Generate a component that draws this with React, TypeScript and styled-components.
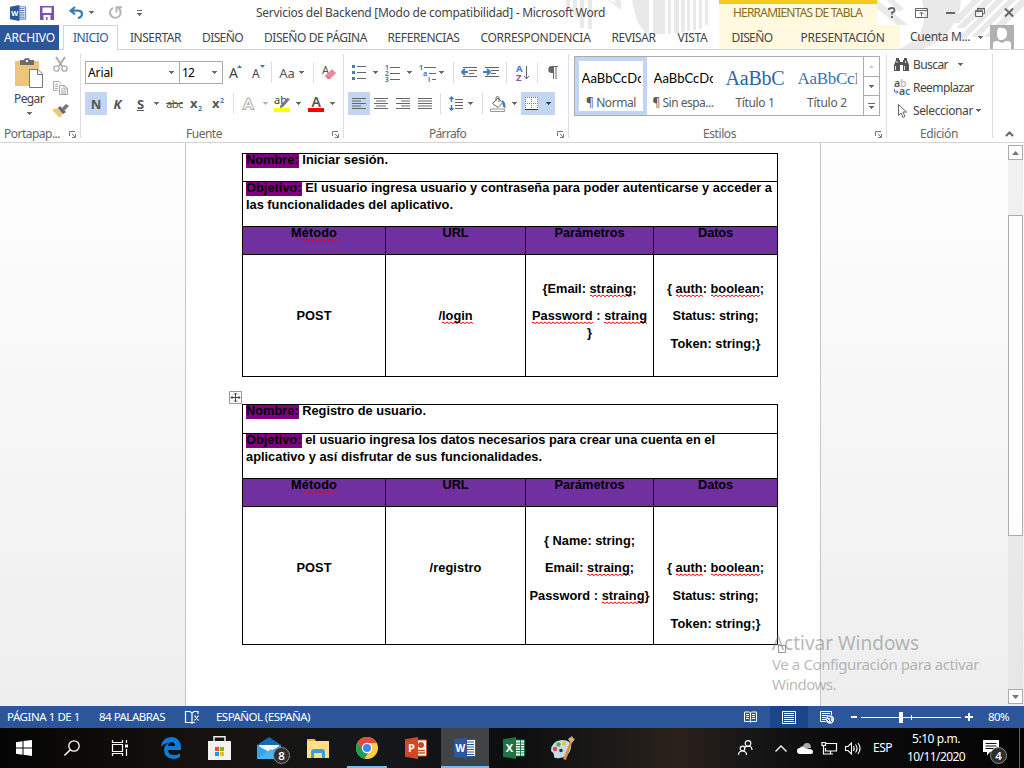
import React, { useLayoutEffect, useRef, useState } from 'react';
import styled, { createGlobalStyle, css } from 'styled-components';

const UI = '"Noto Sans", "Open Sans", sans-serif';

const GlobalStyle = createGlobalStyle`
  * { box-sizing: border-box; }
  body { margin: 0; width: 1024px; height: 768px; overflow: hidden; font: 12px/16px ${UI}; color: #444; }
  svg { display: block; flex: none; overflow: visible; }
`;

/* ---------- text tracked to a given measure ---------- */

const Tracked = styled.span<{ $w: number }>`
  display: inline-block;
  flex: none;
  width: ${p => p.$w}px;
  white-space: nowrap;
`;

function Fit({ w, children, className }: { w: number; children: React.ReactNode; className?: string }) {
  const inner = useRef<HTMLSpanElement>(null);
  const [spacing, setSpacing] = useState(0);
  useLayoutEffect(() => {
    const el = inner.current!;
    const count = (el.textContent || '').length;
    setSpacing((w - el.getBoundingClientRect().width) / count);
  }, [w]);
  return (
    <Tracked $w={w} className={className}>
      <span ref={inner} style={{ letterSpacing: `${spacing}px` }}>{children}</span>
    </Tracked>
  );
}

/* ---------- shared bits ---------- */

const Item = styled.div<{ $ml?: number; $w: number; $on?: boolean }>`
  display: flex;
  align-items: center;
  justify-content: center;
  flex: none;
  margin-left: ${p => p.$ml || 0}px;
  width: ${p => p.$w}px;
  height: ${p => (p.$on ? '23px' : '100%')};
  background: ${p => (p.$on ? '#c2d5f2' : 'transparent')};
  white-space: nowrap;
`;

const Caret = ({ color = '#6a6a6a' }: { color?: string }) => (
  <svg width="5" height="3" viewBox="0 0 5 3"><path d="M0 0h5v1H4v1H3v1H2V2H1V1H0z" fill={color} shapeRendering="crispEdges" /></svg>
);

const Rule = styled.div<{ $ml: number; $h?: number }>`
  flex: none;
  width: 1px;
  height: ${p => p.$h || 21}px;
  margin-left: ${p => p.$ml}px;
  background: #dcdcdc;
`;

/* ---------- window header ---------- */

const Screen = styled.div`
  width: 1024px;
  height: 768px;
  display: flex;
  flex-direction: column;
  overflow: hidden;
  background: #fff;
`;

const Header = styled.header`
  position: relative;
  height: 50px;
  border-bottom: 1px solid #d4d4d4;
  flex: none;
`;

const Backdrop = styled.div`
  position: absolute;
  left: 560px;
  top: 0;
`;

const TitleBar = styled.div`
  position: relative;
  display: flex;
  height: 25px;
  align-items: center;
`;

const ContextTitle = styled.div`
  width: 158px;
  height: 25px;
  margin-left: 114px;
  padding: 4px 0 0 14px;
  border-top: 4px solid #f5ca1d;
  background: #fff9e0;
  color: #8a6b10;
  line-height: 10px;
`;

const Tabs = styled.nav`
  position: relative;
  display: flex;
  height: 25px;
`;

const Tab = styled.div<{ $w: number; $kind?: 'file' | 'active' | 'context' }>`
  display: flex;
  flex: none;
  justify-content: center;
  width: ${p => p.$w}px;
  height: 24px;
  line-height: 25px;
  ${p => p.$kind === 'file' && css`background: #2b579a; color: #fff; height: 25px;`}
  ${p => p.$kind === 'context' && css`background: #fff9e0;`}
  ${p => p.$kind === 'active' && css`
    height: 25px; margin: 0 2px 0 4px; background: #fff; color: #2b579a;
    border: 1px solid #d4d4d4; border-bottom: 0; line-height: 23px;
  `}
`;

const Account = styled.div`
  display: flex;
  align-items: center;
  margin-left: 10px;
  height: 24px;
`;

const tabs: [string, number, number][] = [
  ['INSERTAR', 71, 51], ['DISEÑO', 63, 41], ['DISEÑO DE PÁGINA', 123, 103], ['REFERENCIAS', 93, 72],
  ['CORRESPONDENCIA', 131, 110], ['REVISAR', 65, 44], ['VISTA', 53, 30],
];

const WordLogo = ({ size }: { size: number }) => (
  <svg width={size} height={size} viewBox="0 0 22 22">
    <path d="M12 2.5h9.5v17H12z" fill="#fff" stroke="#2b579a" />
    <path d="M13 5h7M13 7.5h7M13 10h7M13 12.5h7M13 15h7M13 17.5h7" stroke="#2b579a" strokeWidth="1.1" />
    <path d="M0 2.3L13 0v22L0 19.7z" fill="#2b579a" />
    <text x="6.4" y="15" textAnchor="middle" fontFamily="Open Sans" fontWeight="700" fontSize="10" fill="#fff">W</text>
  </svg>
);

function WindowHeader() {
  return (
    <Header>
      <Backdrop>
        <svg width="464" height="49" viewBox="0 0 464 49">
          <g fill="#e9e9e9">
            <path d="M6 0h4v10l-4-3zM13 0h4v18l-4-4zM20 0h4v28h-4zM28 0h4v29h-4zM34 0h15q9 2 12 10L48 0zM54 0h7v10zM72 0h17v34q-12-4-17-34z" />
            <path d="M93 0h12v34H93zM108 0h3v34h-3zM114 0h5v33h-5zM121 0h4v32h-4zM127 0h3v31h-3zM133 0h3v30h-3zM139 0h3v29h-3zM145 0h3v25h-3z" />
            <path d="M317 0l31 25h-11L307 0zM334 0l10 9-5 3-12-12zM362 0h39q-2 33-38 49h-25q34-12 24-49z" />
            <path d="M412 0h9l-22 23h-9zM424 0h9l-28 28h-9zM436 0h8l-38 38h-8zM448 0h8l-37 37h-8zM460 0h4v6l-31 31h-9z" />
          </g>
        </svg>
      </Backdrop>
      <TitleBar>
        <Item $ml={10} $w={16}><WordLogo size={16} /></Item>
        <Item $ml={14} $w={14}>
          <svg width="14" height="14" viewBox="0 0 14 14">
            <path d="M0 0h14v14H0z" fill="#7e4fb0" /><path d="M2.500 1.500h9V7h-9zM3.500 9h7v5H7.500v-3H6v3H3.500z" fill="#fff" />
          </svg>
        </Item>
        <Item $ml={15} $w={14}>
          <svg width="14" height="13" viewBox="0 0 14 13">
            <path d="M6 1L1.5 4.7 6 8.500M1.500 4.700H9.500Q13 5 13 8T9 12.200" fill="none" stroke="#3d7cbf" strokeWidth="2.200" />
          </svg>
        </Item>
        <Item $ml={6} $w={5}><Caret /></Item>
        <Item $ml={15} $w={13}>
          <svg width="13" height="13" viewBox="0 0 13 13">
            <path d="M4 1.800A5.300 5.300 0 1 0 9.500 2.300M7.500 6.500V1.200H13" fill="none" stroke="#b5b5b5" strokeWidth="2" />
          </svg>
        </Item>
        <Item $ml={15} $w={5}>
          <svg width="5" height="6" viewBox="0 0 5 6" shapeRendering="crispEdges"><path d="M0 0h5v1H0zM0 3h5v1H4v1H3v1H2V5H1V4H0z" fill="#6a6a6a" /></svg>
        </Item>
        <Item $ml={114} $w={349}><Fit w={349}>Servicios del Backend [Modo de compatibilidad] - Microsoft Word</Fit></Item>
        <ContextTitle><Fit w={129}>HERRAMIENTAS DE TABLA</Fit></ContextTitle>
        <Item $ml={11} $w={8}>
          <svg width="8" height="11" viewBox="0 0 8 11"><path d="M1 3V1.800Q2 1 4 1 6.500 1 6.500 3T4 5.500V7.500" fill="none" stroke="#666" strokeWidth="1.800" /><path d="M3 9h2v2H3z" fill="#666" /></svg>
        </Item>
        <Item $ml={19} $w={13}>
          <svg width="13" height="10" viewBox="0 0 13 10"><path d="M.5.500h12v9H.5zM.5 2.500h12M6.500 8.500v-4M4.500 6l2-2 2 2" fill="none" stroke="#666" /></svg>
        </Item>
        <Item $ml={18} $w={9}><svg width="9" height="2" viewBox="0 0 9 2"><path d="M0 0h9v2H0z" fill="#666" /></svg></Item>
        <Item $ml={20} $w={10}>
          <svg width="10" height="9" viewBox="0 0 10 9"><path d="M2.500 3V.5h7v5H7.500M.5 3h7v5.500h-7z" fill="none" stroke="#666" /><path d="M2 0h8v1.500H2zM0 2.500h8V4H0z" fill="#666" /></svg>
        </Item>
        <Item $ml={19} $w={10}>
          <svg width="10" height="9" viewBox="0 0 10 9"><path d="M1 .5l8 8M9 .5l-8 8" stroke="#666" strokeWidth="2" /></svg>
        </Item>
      </TitleBar>
      <Tabs>
        <Tab $w={59} $kind="file"><Fit w={51}>ARCHIVO</Fit></Tab>
        <Tab $w={55} $kind="active"><Fit w={35}>INICIO</Fit></Tab>
        {tabs.map(([name, w, text]) => <Tab key={name} $w={w}><Fit w={text}>{name}</Fit></Tab>)}
        <Tab $w={66} $kind="context"><Fit w={41}>DISEÑO</Fit></Tab>
        <Tab $w={115} $kind="context"><Fit w={84}>PRESENTACIÓN</Fit></Tab>
        <Account>
          <Fit w={60}>Cuenta M...</Fit>
          <Item $ml={8} $w={5}><Caret /></Item>
          <Item $ml={7} $w={24}>
            <svg width="24" height="24" viewBox="0 0 24 24">
              <path d="M0 0h24v24H0z" fill="#b1b1b1" />
              <path d="M12 3q5 0 5 5.500T12 15 7 8.500 12 3zM3 24v-5q0-3 4-3h1l4 2 4-2h1q4 0 4 3v5z" fill="#fff" />
            </svg>
          </Item>
        </Account>
      </Tabs>
    </Header>
  );
}

/* ---------- ribbon ---------- */

const RibbonBar = styled.section`
  display: flex;
  flex: none;
  height: 93px;
  border-bottom: 1px solid #d4d4d4;
`;

const Group = styled.div<{ $w: number }>`
  display: flex;
  flex-direction: column;
  flex: none;
  width: ${p => p.$w}px;
  height: 84px;
  margin-top: 4px;
  border-right: 1px solid #dedede;
`;

const GroupBody = styled.div`
  flex: none;
  height: 71px;
`;

const GroupFoot = styled.div<{ $left: number }>`
  display: flex;
  flex: none;
  align-items: center;
  height: 18px;
  padding-left: ${p => p.$left}px;
  color: #666;
`;

const ToolRow = styled.div<{ $top: number; $left?: number }>`
  display: flex;
  align-items: center;
  height: 23px;
  margin-top: ${p => p.$top}px;
  padding-left: ${p => p.$left || 0}px;
`;

const Combo = styled.div<{ $w: number; $ml?: number }>`
  display: flex;
  flex: none;
  align-items: center;
  justify-content: space-between;
  width: ${p => p.$w}px;
  height: 23px;
  margin-left: ${p => p.$ml || 0}px;
  padding: 0 5px 0 2px;
  border: 1px solid #ababab;
  color: #000;
`;

const Glyph = styled.span<{ $size?: number; $bold?: boolean; $italic?: boolean; $color?: string; $line?: string }>`
  font-size: ${p => p.$size || 12}px;
  font-weight: ${p => (p.$bold ? 700 : 400)};
  font-style: ${p => (p.$italic ? 'italic' : 'normal')};
  color: ${p => p.$color || '#555'};
  text-decoration: ${p => p.$line || 'none'};
`;

const Struck = styled.span`
  font-size: 11px;
  letter-spacing: -0.5px;
  color: #555;
  text-decoration: line-through;
`;

const Launcher = ({ ml }: { ml: number }) => (
  <Item $ml={ml} $w={7}>
    <svg width="7" height="7" viewBox="0 0 7 7">
      <path d="M.5 5V.5H6M3 3l3 3M6.500 3v3.500H3" fill="none" stroke="#777" />
    </svg>
  </Item>
);

const PasteArea = styled.div`
  display: flex;
  height: 100%;
`;

const PasteButton = styled.div`
  display: flex;
  flex-direction: column;
  align-items: center;
  width: 46px;
  padding: 4px 0 0 12px;
`;

const PasteLabel = styled.div`
  margin: 3px 0 5px;
  height: 16px;
`;

const ClipColumn = styled.div`
  display: flex;
  flex-direction: column;
  gap: 9px;
  padding: 3px 0 0 7px;
`;

function Clipboard() {
  return (
    <Group $w={81}>
      <GroupBody>
        <PasteArea>
          <PasteButton>
            <svg width="28" height="30" viewBox="0 0 28 30">
              <path d="M0 3h24v25H0z" fill="#ecc67f" />
              <path d="M5 2h4q0-2 3-2t3 2h4v5H5z" fill="#6d6d6d" /><path d="M11 2h2v2h-2z" fill="#fff" />
              <path d="M14.500 11.500H23L27.500 16v13.500h-13z" fill="#fff" stroke="#777" /><path d="M22.500 11.500v5h5" fill="none" stroke="#777" />
            </svg>
            <PasteLabel><Fit w={30}>Pegar</Fit></PasteLabel>
            <Caret />
          </PasteButton>
          <ClipColumn>
            <svg width="15" height="15" viewBox="0 0 15 15">
              <path d="M3 0l6 9M12 0L6 9" stroke="#aaa" strokeWidth="2" />
              <circle cx="3.500" cy="11.500" r="2.700" fill="none" stroke="#aaa" strokeWidth="1.300" /><circle cx="11.500" cy="11.500" r="2.700" fill="none" stroke="#aaa" strokeWidth="1.300" />
            </svg>
            <svg width="15" height="14" viewBox="0 0 15 14">
              <path d="M5 9.500H.5V.500H6L8.500 3M2 3.500h3M2 5.500h3M2 7.500h3" fill="none" stroke="#b0a8a8" />
              <path d="M6.500 4.500h5l3 3v6h-8zM11 4.500V8h3.500M8 8h2M8 10h5M8 12h5" fill="#fff" stroke="#a9a0a0" />
            </svg>
            <svg width="16" height="14" viewBox="0 0 16 14">
              <path d="M0 5l5-1 5 5-3 5-7-7z" fill="#ecc67f" /><path d="M5 4l2-2 6 6-3 2z" fill="#666" /><path d="M9 4l4-4 3 2-5 5z" fill="#777" />
            </svg>
          </ClipColumn>
        </PasteArea>
      </GroupBody>
      <GroupFoot $left={4}><Fit w={56}>Portapap...</Fit><Launcher ml={9} /></GroupFoot>
    </Group>
  );
}

function FontGroup() {
  return (
    <Group $w={263}>
      <GroupBody>
        <ToolRow $top={7} $left={4}>
          <Combo $w={95}><Fit w={25}>Arial</Fit><Caret /></Combo>
          <Combo $w={44} $ml={-1}><Fit w={12}>12</Fit><Caret /></Combo>
          <Item $ml={6} $w={13}>
            <svg width="13" height="16" viewBox="0 0 13 16"><text x="0" y="13" fontSize="14" fill="#444">A</text><path d="M8 3l2.500-3L13 3z" fill="#3d7cbf" /></svg>
          </Item>
          <Item $ml={10} $w={13}>
            <svg width="13" height="16" viewBox="0 0 13 16"><text x="0" y="13" fontSize="12" fill="#444">A</text><path d="M8 0h5l-2.500 3z" fill="#3d7cbf" /></svg>
          </Item>
          <Rule $ml={6} />
          <Item $ml={7} $w={16}><Glyph $size={13}>Aa</Glyph></Item>
          <Item $ml={4} $w={5}><Caret /></Item>
          <Rule $ml={9} />
          <Item $ml={8} $w={15}>
            <svg width="15" height="15" viewBox="0 0 15 15"><text x="0" y="9" fontSize="11" fill="#555">A</text><path d="M4 10l6-6 4 4-6 6H7z" fill="#e88a9a" /><path d="M4 10l4 4H6l-3-3z" fill="#d66b80" /></svg>
          </Item>
        </ToolRow>
        <ToolRow $top={8} $left={4}>
          <Item $w={22} $on><Glyph $bold $size={13}>N</Glyph></Item>
          <Item $ml={6} $w={9}><Glyph $bold $italic $size={13}>K</Glyph></Item>
          <Item $ml={15} $w={7}><Glyph $bold $size={13} $line="underline">S</Glyph></Item>
          <Item $ml={10} $w={5}><Caret /></Item>
          <Item $ml={7} $w={17}><Struck>abc</Struck></Item>
          <Item $ml={7} $w={13}>
            <svg width="13" height="14" viewBox="0 0 13 14"><text x="0" y="11" fontSize="13" fontWeight="700" fill="#555">x</text><text x="8" y="14" fontSize="7" fontWeight="700" fill="#3d7cbf">2</text></svg>
          </Item>
          <Item $ml={9} $w={13}>
            <svg width="13" height="14" viewBox="0 0 13 14"><text x="0" y="11" fontSize="13" fontWeight="700" fill="#555">x</text><text x="8" y="6" fontSize="7" fontWeight="700" fill="#3d7cbf">2</text></svg>
          </Item>
          <Rule $ml={8} />
          <Item $ml={9} $w={12}>
            <svg width="12" height="14" viewBox="0 0 12 14"><text x="0.500" y="12" fontSize="15" fill="#fff" stroke="#a9a9a9" strokeWidth="2.200" paintOrder="stroke">A</text></svg>
          </Item>
          <Item $ml={8} $w={5}><Caret color="#b5b5b5" /></Item>
          <Item $ml={6} $w={16}>
            <svg width="16" height="16" viewBox="0 0 16 16"><text x="0" y="8" fontSize="11" fill="#444">ab</text><path d="M6 10l7-8 3 1-7 8-3 1z" fill="#777" /><path d="M0 12h16v4H0z" fill="#ff0" /></svg>
          </Item>
          <Item $ml={6} $w={5}><Caret /></Item>
          <Item $ml={7} $w={16}>
            <svg width="16" height="16" viewBox="0 0 16 16"><text x="3.500" y="11" fontSize="14" fontWeight="600" fill="#555">A</text><path d="M0 12h16v4H0z" fill="#f00" /></svg>
          </Item>
          <Item $ml={6} $w={5}><Caret /></Item>
        </ToolRow>
      </GroupBody>
      <GroupFoot $left={105}><Fit w={36}>Fuente</Fit><Launcher ml={110} /></GroupFoot>
    </Group>
  );
}

const Bars = ({ d }: { d: string }) => (
  <svg width="14" height="11" viewBox="0 0 14 11"><path d={d} stroke="#666" /></svg>
);

const IndentIcon = ({ flip }: { flip?: boolean }) => (
  <svg width="16" height="11" viewBox="0 0 16 11">
    <path d="M2 .5h14M8 3.500h8M8 6.500h5M2 9.500h14" stroke="#666" />
    <path d={flip ? 'M0 5h6M4 2l3 3-3 3' : 'M7 5H1M4 2L1 5l3 3'} fill="none" stroke="#3d7cbf" strokeWidth="2" />
  </svg>
);

function ParagraphGroup() {
  return (
    <Group $w={225}>
      <GroupBody>
        <ToolRow $top={7}>
          <Item $ml={8} $w={14}>
            <svg width="14" height="15" viewBox="0 0 14 15"><path d="M5 1.500h9M5 7.500h9M5 13.500h9" stroke="#666" /><path d="M0 0h3v3H0zM0 6h3v3H0zM0 12h3v3H0z" fill="#3d7cbf" /></svg>
          </Item>
          <Item $ml={7} $w={5}><Caret /></Item>
          <Item $ml={7} $w={16}>
            <svg width="16" height="16" viewBox="0 0 16 16">
              <path d="M5 2.500h10M5 8.500h10M5 14.500h10" stroke="#666" />
              <g fontSize="6.500" fontWeight="700" fill="#3d7cbf"><text x="0" y="5">1</text><text x="0" y="11">2</text><text x="0" y="17">3</text></g>
            </svg>
          </Item>
          <Item $ml={6} $w={5}><Caret /></Item>
          <Item $ml={7} $w={17}>
            <svg width="17" height="16" viewBox="0 0 17 16">
              <path d="M5 2.500h12M10 8.500h7M13 14.500h4" stroke="#666" />
              <g fontSize="7" fontWeight="700" fill="#3d7cbf"><text x="0" y="5">1</text><text x="4" y="11">a</text><text x="9" y="16.500">i</text></g>
            </svg>
          </Item>
          <Item $ml={3} $w={5}><Caret /></Item>
          <Rule $ml={9} />
          <Item $ml={7} $w={16}><IndentIcon /></Item>
          <Item $ml={6} $w={16}><IndentIcon flip /></Item>
          <Rule $ml={7} />
          <Item $ml={9} $w={13}>
            <svg width="13" height="16" viewBox="0 0 13 16">
              <g fontSize="9.500" fontWeight="700"><text x="0" y="7" fill="#3d7cbf">A</text><text x="0" y="16" fill="#8a4fae">Z</text></g>
              <path d="M10.500 1v13M8 11l2.500 3 2.500-3" fill="none" stroke="#666" />
            </svg>
          </Item>
          <Rule $ml={8} />
          <Item $ml={9} $w={11}>
            <svg width="11" height="13" viewBox="0 0 11 13"><path d="M5 0h6v1H9.500v12h-1V1H7v12H6V7H4.500A3.500 3.500 0 0 1 5 0z" fill="#666" /></svg>
          </Item>
        </ToolRow>
        <ToolRow $top={8}>
          <Item $ml={4} $w={22} $on><Bars d="M0 .5h14M0 3h9M0 5.500h14M0 8h9M0 10.500h14" /></Item>
          <Item $ml={4} $w={14}><Bars d="M0 .5h14M2 3h10M0 5.500h14M2 8h10M0 10.500h14" /></Item>
          <Item $ml={8} $w={14}><Bars d="M0 .5h14M5 3h9M0 5.500h14M5 8h9M0 10.500h14" /></Item>
          <Item $ml={8} $w={14}><Bars d="M0 .5h14M0 3h14M0 5.500h14M0 8h14M0 10.500h14" /></Item>
          <Rule $ml={8} />
          <Item $ml={8} $w={14}>
            <svg width="14" height="15" viewBox="0 0 14 15">
              <path d="M6 3.500h8M6 6.500h8M6 9.500h8M6 12.500h8" stroke="#666" />
              <path d="M2.500 1v5M.500 3l2-2 2 2M2.500 9v5M.500 12l2 2 2-2" fill="none" stroke="#3d7cbf" strokeWidth="1.500" />
            </svg>
          </Item>
          <Item $ml={5} $w={5}><Caret /></Item>
          <Rule $ml={9} />
          <Item $ml={7} $w={16}>
            <svg width="16" height="16" viewBox="0 0 16 16">
              <path d="M2.500 7.500L8 2l4.500 5L8 11.500zM6 5V2q0-1.500 1.500-1.500T9 2v4" fill="#fff" stroke="#666" />
              <path d="M12 4q4 2 3.500 8-3 0-3-5z" fill="#3d7cbf" /><path d="M.5 13h14v2.500H.5z" fill="#fff" stroke="#999" />
            </svg>
          </Item>
          <Item $ml={6} $w={5}><Caret /></Item>
          <Item $ml={4} $w={34} $on>
            <svg width="13" height="13" viewBox="0 0 13 13">
              <path d="M0 0h13v13H0z" fill="#fff" /><path d="M0 .500h13M.5 0v13M12.500 0v13M6.500 0v13M0 6.500h13" fill="none" stroke="#777" strokeDasharray="1 1" />
              <path d="M0 12.500h13" stroke="#333" />
            </svg>
            <Item $ml={8} $w={5}><Caret color="#444" /></Item>
          </Item>
        </ToolRow>
      </GroupBody>
      <GroupFoot $left={85}><Fit w={37}>Párrafo</Fit><Launcher ml={91} /></GroupFoot>
    </Group>
  );
}

const Gallery = styled.div`
  display: flex;
  width: 306px;
  height: 60px;
  margin: 2px 0 0 5px;
  border: 1px solid #ababab;
`;

const StyleCard = styled.div<{ $on?: boolean }>`
  display: flex;
  flex-direction: column;
  align-items: center;
  flex: none;
  width: 72px;
  height: 58px;
  border: 4px solid ${p => (p.$on ? '#c2d5f2' : 'transparent')};
  color: #5a5a5a;
`;

const Sample = styled.div<{ $font: string; $size: number; $color: string }>`
  flex: none;
  height: 34px;
  width: 59px;
  overflow: hidden;
  font-family: ${p => p.$font};
  font-size: ${p => p.$size}px;
  line-height: 35px;
  color: ${p => p.$color};
`;

const GalleryScroll = styled.div`
  display: flex;
  flex-direction: column;
  width: 16px;
  border-left: 1px solid #ababab;
`;

const ScrollStep = styled.div`
  display: flex;
  flex: 1;
  align-items: center;
  justify-content: center;
  & + & { border-top: 1px solid #ababab; }
`;

const SANS = 'Lato, "Open Sans", sans-serif';
const SERIF = '"Liberation Serif", serif';

function StylesGroup() {
  return (
    <Group $w={318}>
      <GroupBody>
        <Gallery>
          <StyleCard $on><Sample $font={SANS} $size={13} $color="#000"><Fit w={62}>AaBbCcDc</Fit></Sample><Fit w={50}>¶ Normal</Fit></StyleCard>
          <StyleCard><Sample $font={SANS} $size={13} $color="#000"><Fit w={62}>AaBbCcDc</Fit></Sample><Fit w={61}>¶ Sin espa...</Fit></StyleCard>
          <StyleCard><Sample $font={SERIF} $size={20} $color="#2e64a5"><Fit w={59}>AaBbC</Fit></Sample><Fit w={39}>Título 1</Fit></StyleCard>
          <StyleCard><Sample $font={SERIF} $size={17} $color="#3b72b0"><Fit w={62}>AaBbCcI</Fit></Sample><Fit w={40}>Título 2</Fit></StyleCard>
          <GalleryScroll>
            <ScrollStep><svg width="5" height="3" viewBox="0 0 5 3"><path d="M0 3h5L2.500 0z" fill="#c8c8c8" /></svg></ScrollStep>
            <ScrollStep><Caret /></ScrollStep>
            <ScrollStep><svg width="7" height="6" viewBox="0 0 7 6" shapeRendering="crispEdges"><path d="M0 0h7v1H0zM1 3h5v1H5v1H4v1H3V5H2V4H1z" fill="#6a6a6a" /></svg></ScrollStep>
          </GalleryScroll>
        </Gallery>
      </GroupBody>
      <GroupFoot $left={134}><Fit w={33}>Estilos</Fit><Launcher ml={139} /></GroupFoot>
    </Group>
  );
}

function EditingGroup() {
  return (
    <Group $w={106}>
      <GroupBody>
        <ToolRow $top={-1} $left={7}>
          <Item $w={15}>
            <svg width="15" height="13" viewBox="0 0 15 13">
              <path d="M2 2V0h3v2h1v2h3V2h1V0h3v2l2 5v6H9V7H6v6H0V7z" fill="#555" /><path d="M1.500 8v4M10.500 8v4M3 3v2M11.500 3v2" stroke="#ddd" />
            </svg>
          </Item>
          <Item $ml={4} $w={35}><Fit w={35}>Buscar</Fit></Item><Item $ml={10} $w={5}><Caret /></Item>
        </ToolRow>
        <ToolRow $top={0} $left={7}>
          <Item $w={16}>
            <svg width="16" height="16" viewBox="0 0 16 16">
              <g fontSize="10.500" fontWeight="600"><text x="0" y="7" fill="#555">a</text><text x="6" y="7" fill="#bbb">b</text><text x="5" y="15" fill="#555">a</text><text x="11" y="15" fill="#3d7cbf">c</text></g>
              <path d="M.5 9v3h3M2.500 10.500L4 12l-1.500 1.500" fill="none" stroke="#3d7cbf" />
            </svg>
          </Item>
          <Item $ml={3} $w={61}><Fit w={61}>Reemplazar</Fit></Item>
        </ToolRow>
        <ToolRow $top={0} $left={11}>
          <Item $w={9}>
            <svg width="9" height="14" viewBox="0 0 9 14"><path d="M.5.500v11L3 9l2 4.500 2-1L5 8h3.500z" fill="#fff" stroke="#666" /></svg>
          </Item>
          <Item $ml={6} $w={60}><Fit w={60}>Seleccionar</Fit></Item><Item $ml={3} $w={5}><Caret /></Item>
        </ToolRow>
      </GroupBody>
      <GroupFoot $left={33}><Fit w={38}>Edición</Fit></GroupFoot>
    </Group>
  );
}

const CollapseCorner = styled.div`
  display: flex;
  align-items: flex-end;
  padding: 0 0 5px 12px;
`;

/* ---------- document ---------- */

const Workspace = styled.main`
  position: relative;
  display: flex;
  flex: none;
  height: 563px;
  background: linear-gradient(#fefefe, #eeeeee);
`;

const Page = styled.article`
  width: 636px;
  margin-left: 185px;
  padding: 10px 0 0 56px;
  border: solid #c6c6c6;
  border-width: 0 1px;
  background: #fff;
  font: bold 12.8px/17px "Liberation Sans", Arial, sans-serif;
  color: #000;
`;

const ApiTable = styled.div<{ $rows: string }>`
  position: relative;
  display: grid;
  width: 536px;
  grid-template-columns: 143px 140px 128px 125px;
  grid-template-rows: ${p => p.$rows};
  border-bottom: 1px solid #000;
  & + & { margin-top: 27px; }
`;

const Cell = styled.div<{ $wide?: boolean; $top?: number; $head?: boolean; $last?: boolean }>`
  grid-column: ${p => (p.$wide ? '1 / -1' : 'auto')};
  overflow: hidden;
  border: solid #000;
  border-width: 1px ${p => (p.$wide || p.$last ? 1 : 0)}px 0 1px;
  padding: ${p => p.$top || 0}px 0 0 ${p => (p.$wide ? 3 : 0)}px;
  text-align: ${p => (p.$wide ? 'left' : 'center')};
  background: ${p => (p.$head ? '#7030a0' : 'transparent')};
`;

const Para = styled.div<{ $gap?: number; $up?: boolean }>`
  height: 17px;
  margin-top: ${p => (p.$up ? '-3px' : '0')};
  margin-bottom: ${p => p.$gap || 0}px;
  white-space: nowrap;
`;

const Highlight = styled.span`
  background: #800080;
  padding-bottom: 1px;
`;

const Typo = styled.span`
  padding-bottom: 1px;
  background: url("data:image/svg+xml,%3Csvg xmlns='http://www.w3.org/2000/svg' width='4' height='3'%3E%3Cpath d='M-1 3L1 1L3 2.500L5 0.500' fill='none' stroke='red' stroke-width='0'/%3E%3Cpath d='M0 1.800L1 1L3 2.600L4 1.800' fill='none' stroke='red' stroke-width='1'/%3E%3C/svg%3E") repeat-x left bottom;
`;

const MoveHandle = styled.div`
  position: absolute;
  left: -13px;
  top: -13px;
`;

const ResizeHandle = styled.div`
  position: absolute;
  right: -8px;
  bottom: -9px;
  width: 8px;
  height: 8px;
  border: 1px solid #9a9a9a;
`;

const heads: [React.ReactNode, number][] = [
  [<>M<Typo>étodo</Typo></>, 46], ['URL', 26], ['Parámetros', 70], ['Datos', 35],
];

const HeadRow = () => (
  <>{heads.map(([h, w], i) => <Cell key={i} $head $last={i === 3}><Para $up><Fit w={w}>{h}</Fit></Para></Cell>)}</>
);

const DataLines = ({ gap }: { gap: number }) => (
  <>
    <Para $gap={gap}><Fit w={97}>{'{ '}<Typo>auth</Typo>: <Typo>boolean</Typo>;</Fit></Para>
    <Para $gap={11}><Fit w={86}>Status: string;</Fit></Para>
    <Para><Fit w={90}>{'Token: string;}'}</Fit></Para>
  </>
);

function DocumentPage() {
  return (
    <Page>
      <ApiTable $rows="28px 45px 28px 122px">
        <Cell $wide><Para $up><Fit w={142}><Highlight>Nombre:</Highlight> Iniciar sesión.</Fit></Para></Cell>
        <Cell $wide>
          <Para $up><Fit w={526}><Highlight>Objetivo:</Highlight> El usuario ingresa usuario y contraseña para poder autenticarse y acceder a</Fit></Para>
          <Para><Fit w={207}>las funcionalidades del aplicativo.</Fit></Para>
        </Cell>
        <HeadRow />
        <Cell $top={52}><Para><Fit w={35}>POST</Fit></Para></Cell>
        <Cell $top={52}><Para><Fit w={34}>/<Typo>login</Typo></Fit></Para></Cell>
        <Cell $top={25}>
          <Para $gap={10}><Fit w={94}>{'{Email: '}<Typo>straing</Typo>;</Fit></Para>
          <Para><Fit w={115}><Typo>Password</Typo> : <Typo>straing</Typo></Fit></Para>
          <Para>{'}'}</Para>
        </Cell>
        <Cell $top={25} $last><DataLines gap={10} /></Cell>
      </ApiTable>
      <ApiTable $rows="29px 45px 28px 138px">
        <MoveHandle>
          <svg width="13" height="13" viewBox="0 0 13 13">
            <path d="M.5.500h12v12H.5z" fill="#fff" stroke="#999" />
            <path d="M6.500 2v9M2 6.500h9M5 3.500l1.500-1.500L8 3.500M5 9.500L6.500 11 8 9.500M3.500 5L2 6.500 3.500 8M9.500 5L11 6.500 9.500 8" fill="none" stroke="#444" />
          </svg>
        </MoveHandle>
        <Cell $wide><Para $up><Fit w={180}><Highlight>Nombre:</Highlight> Registro de usuario.</Fit></Para></Cell>
        <Cell $wide>
          <Para $up><Fit w={469}><Highlight>Objetivo:</Highlight> el usuario ingresa los datos necesarios para crear una cuenta en el</Fit></Para>
          <Para><Fit w={296}>aplicativo y así disfrutar de sus funcionalidades.</Fit></Para>
        </Cell>
        <HeadRow />
        <Cell $top={52}><Para><Fit w={35}>POST</Fit></Para></Cell>
        <Cell $top={52}><Para><Fit w={52}>/registro</Fit></Para></Cell>
        <Cell $top={25}>
          <Para $gap={10}><Fit w={91}>{'{ Name: string;'}</Fit></Para>
          <Para $gap={11}><Fit w={89}>Email: <Typo>straing</Typo>;</Fit></Para>
          <Para><Fit w={120}>Password : <Typo>straing</Typo>{'}'}</Fit></Para>
        </Cell>
        <Cell $top={52} $last><DataLines gap={11} /></Cell>
        <ResizeHandle />
      </ApiTable>
    </Page>
  );
}

const ScrollTrack = styled.div`
  display: flex;
  flex-direction: column;
  width: 15px;
  height: 559px;
  margin: 2px 0 0 187px;
  background: linear-gradient(#f1f1f1, #e6e6e6);
`;

const ScrollButton = styled.div`
  display: flex;
  align-items: center;
  justify-content: center;
  height: 15px;
  border: 1px solid #ababab;
  background: #fff;
`;

const ScrollThumb = styled.div`
  height: 321px;
  margin: 55px 0 153px;
  border: 1px solid #ababab;
  background: #fff;
`;

const ActivationNotice = styled.div`
  position: absolute;
  left: 772px;
  top: 488px;
  width: 230px;
  font-size: 15px;
  line-height: 20px;
  color: rgba(125, 125, 125, 0.55);
`;

const NoticeTitle = styled.div`
  height: 23px;
  font-size: 19px;
  line-height: 24px;
`;

/* ---------- status bar ---------- */

const StatusBar = styled.footer`
  display: flex;
  align-items: center;
  flex: none;
  height: 22px;
  background: #2b579a;
  color: #fff;
  font-size: 11.500px;
`;

const ViewMode = styled.div<{ $ml: number; $w: number; $on?: boolean }>`
  display: flex;
  align-items: center;
  justify-content: center;
  width: ${p => p.$w}px;
  height: 22px;
  margin-left: ${p => p.$ml}px;
  background: ${p => (p.$on ? '#19478a' : 'transparent')};
`;

function Status() {
  return (
    <StatusBar>
      <Item $ml={7} $w={73}><Fit w={73}>PÁGINA 1 DE 1</Fit></Item>
      <Item $ml={19} $w={66}><Fit w={66}>84 PALABRAS</Fit></Item>
      <Item $ml={20} $w={15}>
        <svg width="15" height="13" viewBox="0 0 15 13"><path d="M7 11.500H.5v-11H5L7 2v11M7 2l2-1.500h4V3M7 11.500h3M9.500 4.500l4 5M13.500 4.500l-4 5" fill="none" stroke="#fff" strokeWidth="1.200" /></svg>
      </Item>
      <Item $ml={16} $w={94}><Fit w={94}>ESPAÑOL (ESPAÑA)</Fit></Item>
      <ViewMode $ml={433} $w={15}>
        <svg width="13" height="12" viewBox="0 0 13 12"><path d="M.5 1h5L6.500 2l1-1h5v9.500h-5l-1 1-1-1h-5zM6.500 2v9M2 3.500h3M2 5.500h3M2 7.500h3M8 3.500h3M8 5.500h3M8 7.500h3" fill="none" stroke="#fff" /></svg>
      </ViewMode>
      <ViewMode $ml={12} $w={38} $on>
        <svg width="14" height="13" viewBox="0 0 14 13"><path d="M.5.500h13v12H.5zM2 2.500h10M2 4.500h10M2 6.500h10M2 8.500h10M2 10.500h10" fill="none" stroke="#fff" /></svg>
      </ViewMode>
      <ViewMode $ml={12} $w={15}>
        <svg width="15" height="13" viewBox="0 0 15 13"><path d="M6 10.500H.5V.500h11V4M2 2.500h8M2 4.500h6M2 6.500h4M2 8.500h4" fill="none" stroke="#fff" /><circle cx="10" cy="8.500" r="4.200" fill="#dfe7f3" /><path d="M8 6l3 1-1 2 2 2M7 8l2 2" stroke="#2b579a" fill="none" /></svg>
      </ViewMode>
      <Item $ml={16} $w={6}><svg width="6" height="2"><path d="M0 0h6v2H0z" fill="#fff" /></svg></Item>
      <Item $ml={4} $w={100}>
        <svg width="100" height="11" viewBox="0 0 100 11"><path d="M0 5h100v1H0zM38 0h4v11h-4zM50 3h1v5h-1z" fill="#fff" /></svg>
      </Item>
      <Item $ml={4} $w={8}><svg width="8" height="8"><path d="M3 0h2v3h3v2H5v3H3V5H0V3h3z" fill="#fff" /></svg></Item>
      <Item $ml={15} $w={21}><Fit w={21}>80%</Fit></Item>
    </StatusBar>
  );
}

/* ---------- taskbar ---------- */

const TaskBar = styled.footer`
  display: flex;
  flex: none;
  height: 40px;
  background: linear-gradient(90deg, #050505 0, #16130f 220px, #15171a 380px, #0c0d0f 510px, #191817 590px, #2a211b 680px, #161616 750px, #0b0b0b 830px, #040404 1024px);
  color: #fff;
`;

const TaskButton = styled.div<{ $w?: number; $ml?: number; $active?: boolean }>`
  position: relative;
  display: flex;
  flex: none;
  align-items: center;
  justify-content: center;
  width: ${p => p.$w || 49}px;
  margin-left: ${p => p.$ml || 0}px;
  background: ${p => (p.$active ? '#414345' : 'transparent')};
`;

const RunMark = styled.div<{ $w: number }>`
  position: absolute;
  bottom: 0;
  width: ${p => p.$w}px;
  height: 2px;
  background: #76b9ed;
`;

const Badge = styled.div<{ $x: number; $y: number }>`
  position: absolute;
  left: ${p => p.$x}px;
  top: ${p => p.$y}px;
  width: 17px;
  height: 17px;
  border: 1px solid #8a8a8a;
  border-radius: 50%;
  background: #2b2f33;
  font-size: 11.500px;
  font-weight: 600;
  line-height: 15px;
  text-align: center;
`;

const Clock = styled.div`
  display: flex;
  flex-direction: column;
  align-items: center;
  width: 58px;
  margin-left: 15px;
  padding-top: 2px;
  line-height: 18px;
`;

const ShowDesktop = styled.div`
  width: 1px;
  margin-left: 12px;
  background: #666;
`;

const OfficeLogo = ({ color, letter, children }: { color: string; letter: string; children: React.ReactNode }) => (
  <svg width="22" height="22" viewBox="0 0 22 22">
    <path d="M12 3h9.500v16H12z" fill="#fff" stroke={color} />
    {children}
    <path d="M0 2.300L13 0v22L0 19.700z" fill={color} />
    <text x="6.400" y="15" textAnchor="middle" fontFamily="Open Sans" fontWeight="700" fontSize="11" fill="#fff">{letter}</text>
  </svg>
);

function WindowsBar() {
  return (
    <TaskBar>
      <TaskButton $w={48}>
        <svg width="16" height="16" viewBox="0 0 16 16"><path d="M0 2.200L6.500 1.300v6.200H0zM7.500 1.100L16 0v7.500H7.500zM0 8.500h6.500v6.200L0 13.800zM7.500 8.500H16V16l-8.500-1.200z" fill="#fff" /></svg>
      </TaskButton>
      <TaskButton $w={48}>
        <svg width="16" height="16" viewBox="0 0 16 16"><circle cx="10" cy="6" r="5.200" fill="none" stroke="#fff" strokeWidth="1.300" /><path d="M6.300 9.700L.500 15.500" stroke="#fff" strokeWidth="1.500" /></svg>
      </TaskButton>
      <TaskButton $w={48}>
        <svg width="16" height="16" viewBox="0 0 16 16"><path d="M.5 0v2.500h10V0M.5 16v-2.500h10V16M.5 4.500h10v7H.5zM14.500 0v3M14.500 9v7" fill="none" stroke="#fff" strokeWidth="1.200" /><path d="M13 4.500h3v3h-3z" fill="#fff" /></svg>
      </TaskButton>
      <TaskButton $ml={2}>
        <svg width="20" height="22" viewBox="0 0 20 22"><path d="M0 10Q1 0 11 0q9 1 9 11v2H7q0 5 6 5 3 0 6-1.500V20q-3 2-7 2-9-1-9-9 0-5 5-7-5 0-8 4zM7 9h7q0-4-3.500-4T7 9z" fill="#0a7bdc" fillRule="evenodd" /></svg>
      </TaskButton>
      <TaskButton>
        <svg width="23" height="24" viewBox="0 0 23 24"><path d="M6 6V.700h11V6" fill="none" stroke="#eee" strokeWidth="1.500" /><path d="M0 5h23v19H0z" fill="#f2f2f2" /><path d="M7 11h4v4H7z" fill="#f25022" /><path d="M12 11h4v4h-4z" fill="#7fba00" /><path d="M7 16h4v4H7z" fill="#00a4ef" /><path d="M12 16h4v4h-4z" fill="#ffb900" /></svg>
      </TaskButton>
      <TaskButton>
        <svg width="24" height="22" viewBox="0 0 24 22"><path d="M0 8L12 0l12 8v14H0z" fill="#1769b3" /><path d="M2 8h20v8H2z" fill="#f6f6f6" /><path d="M0 8l12 7 12-7v14H0z" fill="#35a3e8" /><path d="M0 22l14-10 10 10z" fill="#49b4f1" /></svg>
        <Badge $x={29} $y={19}>8</Badge>
      </TaskButton>
      <TaskButton>
        <svg width="22" height="19" viewBox="0 0 22 19"><path d="M0 0h7l2 2h13v17H0z" fill="#ffdf87" /><path d="M0 0h7l2 2H0z" fill="#e9b84b" /><path d="M4 19v-6q0-3 3-3h8q3 0 3 3v6h-3v-5H7v5z" fill="#36a0dc" /></svg>
      </TaskButton>
      <TaskButton>
        <svg width="22" height="22" viewBox="0 0 22 22">
          <circle cx="11" cy="11" r="11" fill="#ffcd43" />
          <path d="M1.500 5.500A11 11 0 0 1 20.500 5.500L20.800 6H11l-4.500 7.500z" fill="#e04c3f" /><path d="M1.500 5.500L7 13.500l5 2.500-3.500 5.800A11 11 0 0 1 1.500 5.500z" fill="#1f9e58" />
          <circle cx="11" cy="11" r="5.200" fill="#fff" /><circle cx="11" cy="11" r="4" fill="#4285f4" />
        </svg>
        <RunMark $w={40} />
      </TaskButton>
      <TaskButton>
        <OfficeLogo color="#d24726" letter="P"><circle cx="16" cy="8" r="3" fill="#d24726" /><path d="M13 13.500h7M13 16h7" stroke="#d24726" strokeWidth="1.300" /></OfficeLogo>
      </TaskButton>
      <TaskButton $w={48} $ml={1} $active><WordLogo size={22} /><RunMark $w={48} /></TaskButton>
      <TaskButton>
        <OfficeLogo color="#207245" letter="X"><path d="M13 6h8M13 8.500h8M13 11h8M13 13.500h8M13 16h8M17.500 3v16" stroke="#207245" /></OfficeLogo>
      </TaskButton>
      <TaskButton>
        <svg width="25" height="24" viewBox="0 0 25 24">
          <path d="M1 15Q1 5 12 4q10 0 9 8-2 9-11 10-7 1-6-3 0-2-3-4z" fill="#c5dcec" /><circle cx="5" cy="13" r="2.200" fill="#db4b45" /><circle cx="8.500" cy="8.500" r="2.200" fill="#55ae46" /><circle cx="14" cy="7.500" r="2.200" fill="#f0c333" /><circle cx="11" cy="14.500" r="1.800" fill="#333" />
          <path d="M20 6l2 1-6 17-3-1z" fill="#e28b38" /><path d="M18 3l4-3 1 2 2 1-3 4-2-1z" fill="#d5ac7c" />
        </svg>
      </TaskButton>
      <Item $ml={151} $w={15}>
        <svg width="15" height="16" viewBox="0 0 15 16"><g fill="none" stroke="#fff" strokeWidth="1.200"><circle cx="10" cy="3.500" r="2.800" /><circle cx="4.500" cy="8.500" r="2.300" /><path d="M.500 15q0-4 4-4t4 4M6.500 8q1-2 3.500-2 4 0 4 4" /></g></svg>
      </Item>
      <Item $ml={22} $w={12}><svg width="12" height="7" viewBox="0 0 12 7"><path d="M.5 6.500L6 1l5.500 5.500" fill="none" stroke="#fff" strokeWidth="1.300" /></svg></Item>
      <Item $ml={10} $w={16}>
        <svg width="16" height="11" viewBox="0 0 16 11"><path d="M3 6q0-3 3-3 1-3 4-3 4 0 4 5z" fill="#aaa" /><path d="M0 8q0-3 3-3 2-2 5 0l4 1q4 0 4 3 0 2-2 2H3Q0 11 0 8z" fill="#fff" /></svg>
      </Item>
      <Item $ml={8} $w={16}>
        <svg width="16" height="13" viewBox="0 0 16 13"><path d="M5 1.500h10.500v7.500h-11V6M1 .500h3.500v3H1zM2.500 3.500V12H12M9.500 9v3" fill="none" stroke="#fff" strokeWidth="1.200" /></svg>
      </Item>
      <Item $ml={8} $w={16}>
        <svg width="16" height="13" viewBox="0 0 16 13"><path d="M.5 4.500H3l3.500-3.500v11L3 8.500H.5zM8.500 4q1.500 2.500 0 5M10.500 2.500q3 4 0 8M13 1q4 5.500 0 11" fill="none" stroke="#fff" strokeWidth="1.100" /></svg>
      </Item>
      <Item $ml={12} $w={19}><Fit w={19}>ESP</Fit></Item>
      <Clock><Fit w={48}>5:10 p.m.</Fit><Fit w={58}>10/11/2020</Fit></Clock>
      <TaskButton $ml={14} $w={28}>
        <svg width="28" height="16" viewBox="0 0 28 16"><path d="M4 0h16v12H11l-3 3.500V12H4z" fill="#fff" /><path d="M6.500 3.500h11M6.500 6h11M6.500 8.500h8" stroke="#111" /></svg>
        <Badge $x={11} $y={19}>4</Badge>
      </TaskButton>
      <ShowDesktop />
    </TaskBar>
  );
}

export default function App() {
  return (
    <Screen>
      <GlobalStyle />
      <WindowHeader />
      <RibbonBar>
        <Clipboard />
        <FontGroup />
        <ParagraphGroup />
        <StylesGroup />
        <EditingGroup />
        <CollapseCorner><svg width="9" height="6" viewBox="0 0 9 6"><path d="M1 5l3.500-3.500L8 5" fill="none" stroke="#666" strokeWidth="2" /></svg></CollapseCorner>
      </RibbonBar>
      <Workspace>
        <DocumentPage />
        <ScrollTrack>
          <ScrollButton><svg width="7" height="4" viewBox="0 0 7 4"><path d="M0 4h7L3.500 0z" fill="#777" /></svg></ScrollButton>
          <ScrollThumb />
          <ScrollButton><svg width="7" height="4" viewBox="0 0 7 4"><path d="M0 0h7L3.500 4z" fill="#777" /></svg></ScrollButton>
        </ScrollTrack>
        <ActivationNotice>
          <NoticeTitle><Fit w={147}>Activar Windows</Fit></NoticeTitle>
          <Fit w={207}>Ve a Configuración para activar</Fit>
          <Fit w={64}>Windows.</Fit>
        </ActivationNotice>
      </Workspace>
      <Status />
      <WindowsBar />
    </Screen>
  );
}
